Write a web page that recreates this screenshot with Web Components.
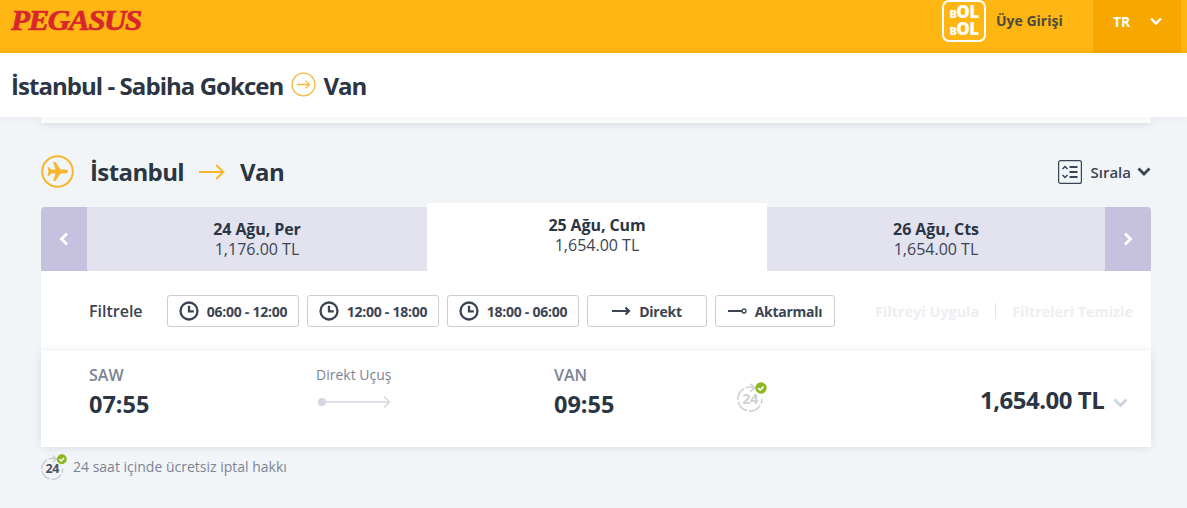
<!DOCTYPE html>
<html lang="tr">
<head>
<meta charset="utf-8">
<title>Pegasus</title>
<style>
  html, body { margin: 0; height: 508px; overflow: hidden; background: #f2f5f8; }
  body { font-family: "Open Sans", "Noto Sans", sans-serif; color: #2b3543; }
</style>
</head>
<body>
<pg-header></pg-header>
<pg-route-bar from="İstanbul - Sabiha Gokcen" to="Van"></pg-route-bar>
<pg-results>
  <pg-date-tabs></pg-date-tabs>
  <pg-filters></pg-filters>
  <pg-flight></pg-flight>
</pg-results>

<script>
const icon24 = (size, color, text) => `
  <svg width="${size}" height="${size}" viewBox="0 0 30 30" fill="none">
    <path d="M17.500 5.900A12 12 0 1 0 25 17" stroke="${color}" stroke-width="1.700" stroke-dasharray="9 2 13 2 13 2 13 2 30" />
    <path d="M13.500 1.800l4.300 4.100-4.600 3.600" stroke="${color}" stroke-width="1.700" />
    <text x="13" y="22" text-anchor="middle" font-family="Open Sans, sans-serif" font-weight="700" font-size="14.500" letter-spacing="-.5" fill="${text}">24</text>
    <circle cx="24" cy="6" r="5.700" fill="#8ab81e" />
    <path d="M21.300 6.100l2 2 3.200-3.400" stroke="#fff" stroke-width="1.700" />
  </svg>`

const clock = `
  <svg width="20" height="20" viewBox="0 0 20 20" fill="none" stroke="#3b4453" stroke-width="2.300">
    <circle cx="10" cy="10" r="8.500" />
    <path d="M10 4.800v5.600h4.800" />
  </svg>`

customElements.define('pg-header', class extends HTMLElement {
  constructor() {
    super()
    this.attachShadow({ mode: 'open' }).innerHTML = `
      <style>
        :host { display: flex; height: 53px; background: #ffb612; align-items: stretch; }
        .logo {
          margin: 5px 0 0 11px; height: 30px;
          font: italic 700 29px/30px "Liberation Serif", serif;
          letter-spacing: -1.300px;
          color: #d8262c;
          transform: scaleX(1.070);
          transform-origin: left;
          -webkit-text-stroke: .7px #d8262c;
        }
        .spacer { flex: 1; }
        .bolbol {
          box-sizing: border-box;
          width: 44px; height: 42px;
          margin-right: 10px;
          border: 2px solid #fff;
          border-radius: 7px;
          color: #fff;
          font: 800 17px/15px "Open Sans", sans-serif;
          letter-spacing: -.6px;
          display: flex; flex-direction: column; align-items: center; justify-content: center;
        }
        .bolbol small { font-size: 11px; }
        .login { font: 700 14px/42px "Open Sans", sans-serif; color: #4e4a3e; width: 97px; }
        .lang {
          width: 88px; margin-right: 6px;
          background: #f7a700;
          color: #fff;
          font: 700 14px/44px "Open Sans", sans-serif;
          display: flex; align-items: flex-start; gap: 20px;
          padding-left: 20px; box-sizing: border-box;
        }
        .lang svg { margin-top: 17px; }
      </style>
      <div class="logo">PEGASUS</div>
      <div class="spacer"></div>
      <div class="bolbol"><span><small>B</small>OL</span><span><small>B</small>OL</span></div>
      <div class="login">Üye Girişi</div>
      <div class="lang"><span>TR</span>
        <svg width="12" height="9" viewBox="0 0 12 9" fill="none" stroke="#fff" stroke-width="2.400"><path d="M1 1.500l5 5 5-5" /></svg>
      </div>`
  }
})

customElements.define('pg-route-bar', class extends HTMLElement {
  connectedCallback() {
    if (this.shadowRoot) return
    this.attachShadow({ mode: 'open' }).innerHTML = `
      <style>
        :host {
          display: flex; position: relative; z-index: 1;
          box-sizing: border-box; height: 64px;
          background: #fff;
          padding: 2px 0 0 11px;
          align-items: center; gap: 8px;
          font: 700 24px/62px "Open Sans", sans-serif;
          letter-spacing: -.95px;
          color: #2b3543;
          box-shadow: 0 2px 8px rgba(60,70,90,.06);
        }
        svg { margin: -3px -1px 0 0; }
      </style>
      <span>${this.getAttribute('from')}</span>
      <svg width="25" height="25" viewBox="0 0 25 25" fill="none" stroke="#f4b93a" stroke-width="1.300">
        <circle cx="12.500" cy="12.500" r="11.400" />
        <path d="M6 12.500h12.500M14.500 8.600l4 3.900-4 3.900" />
      </svg>
      <span>${this.getAttribute('to')}</span>`
  }
})

customElements.define('pg-results', class extends HTMLElement {
  constructor() {
    super()
    this.attachShadow({ mode: 'open' }).innerHTML = `
      <style>
        :host { display: block; width: 1110px; margin-left: 41px; }
        .stub { height: 6px; background: #fff; box-shadow: 0 2px 6px rgba(60,70,90,.12); }
        .title {
          display: flex; align-items: center;
          height: 80px; padding-top: 17px; box-sizing: border-box;
          font: 700 24px/1 "Open Sans", sans-serif;
          letter-spacing: -.6px;
          color: #2b3543;
        }
        .plane { margin-right: 16px; }
        .arrow { margin: 0 15px 0 15px; }
        .sort {
          margin-left: auto; display: flex; align-items: center; gap: 9px;
          font: 600 15px/1 "Open Sans", sans-serif; letter-spacing: 0; color: #3b4453;
        }
        .sort span { margin-top: 1px; }
        .note {
          display: flex; align-items: center; gap: 6px;
          height: 40px;
          font: 400 14px/1 "Open Sans", sans-serif; color: #7c8494;
        }
      </style>
      <div class="stub"></div>
      <div class="title">
        <svg class="plane" width="33" height="33" viewBox="0 0 33 33">
          <circle cx="16.500" cy="16.500" r="15.300" fill="none" stroke="#f7b52b" stroke-width="2" />
          <path fill="#f7b52b" d="M27 16.500c0-1.200-1.400-2-2.800-2h-4.700L14.400 7h-2.300l2.500 7.500H10l-1.700-2.200H6.500l1 4.200-1 4.200h1.800L10 18.500h4.600L12.100 26h2.300l5.100-7.500h4.700c1.400 0 2.800-.8 2.800-2z"/>
        </svg>
        <span>İstanbul</span>
        <svg class="arrow" width="26" height="16" viewBox="0 0 26 16" fill="none" stroke="#f7b52b" stroke-width="1.800">
          <path d="M0 8h24M17 1l7.500 7-7.500 7" />
        </svg>
        <span>Van</span>
        <div class="sort">
          <svg width="24" height="24" viewBox="0 0 24 24" fill="none" stroke="#3b4453">
            <rect x=".6" y=".6" width="22.800" height="22.800" rx="2" stroke-width="1.200" />
            <path d="M4.500 9l2.500-2.500L9.500 9M4.500 15l2.500 2.500L9.500 15" stroke-width="1.500" />
            <path d="M11.500 7h8M11.500 12h8M11.500 17h8" stroke-width="2" />
          </svg>
          <span>Sırala</span>
          <svg width="14" height="10" viewBox="0 0 14 10" fill="none" stroke="#3b4453" stroke-width="2.800" style="margin-left:-3px"><path d="M1.500 1.500L7 7l5.500-5.500" /></svg>
        </div>
      </div>
      <slot></slot>
      <div class="note">
        ${icon24(26, '#c9ccd2', '#4a5260')}
        <span>24 saat içinde ücretsiz iptal hakkı</span>
      </div>`
  }
})

customElements.define('pg-date-tabs', class extends HTMLElement {
  constructor() {
    super()
    const tab = (day, price, cls = '') => `
      <div class="tab ${cls}"><b>${day}</b><span>${price}</span></div>`
    this.attachShadow({ mode: 'open' }).innerHTML = `
      <style>
        :host { display: flex; align-items: flex-end; height: 68px; }
        .nav {
          width: 46px; height: 64px; background: #c6c1df;
          display: flex; align-items: center; justify-content: center;
        }
        .nav.l { border-radius: 4px 0 0 0; }
        .nav.r { border-radius: 0 4px 0 0; }
        .tab {
          width: 340px; height: 64px; background: #e3e3f0;
          display: flex; flex-direction: column; align-items: center; justify-content: center;
          font: 400 16px/20px "Open Sans", sans-serif; color: #3b4453;
        }
        .tab b { font-weight: 700; letter-spacing: -.1px; color: #2b3543; }
        .tab.on { height: 68px; box-sizing: border-box; padding-bottom: 4px; background: #fff; }
        .tab.last { width: 338px; }
      </style>
      <div class="nav l"><svg width="10" height="14" viewBox="0 0 10 14" fill="none" stroke="#fff" stroke-width="2.800"><path d="M8 1.500L2.500 7 8 12.500" /></svg></div>
      ${tab('24 Ağu, Per', '1,176.00 TL')}
      ${tab('25 Ağu, Cum', '1,654.00 TL', 'on')}
      ${tab('26 Ağu, Cts', '1,654.00 TL', 'last')}
      <div class="nav r"><svg width="10" height="14" viewBox="0 0 10 14" fill="none" stroke="#fff" stroke-width="2.800"><path d="M2 1.500L7.500 7 2 12.500" /></svg></div>`
  }
})

customElements.define('pg-filters', class extends HTMLElement {
  constructor() {
    super()
    const btn = (svg, label, w) => `
      <div class="btn" style="width:${w}px">${svg}<span>${label}</span></div>`
    this.attachShadow({ mode: 'open' }).innerHTML = `
      <style>
        :host {
          display: flex; align-items: center;
          height: 80px; box-sizing: border-box;
          padding: 0 18px 0 48px;
          background: #fff;
          position: relative;
          font-family: "Open Sans", sans-serif;
        }
        .lbl { font-size: 16px; font-weight: 600; color: #3b4453; width: 78px; }
        .btn {
          box-sizing: border-box; height: 32px; margin-right: 8px;
          border: 1px solid #ccced3; border-radius: 3px;
          display: flex; align-items: center; justify-content: center; gap: 8px;
          font-size: 14px; font-weight: 700; color: #3b4453; letter-spacing: -.25px;
        }
        .acts {
          margin-left: auto; display: flex; align-items: center;
          font-size: 14.400px; font-weight: 700; color: #eceef1;
        }
        .acts i { width: 1px; height: 16px; background: #e2e4e8; margin: 0 16px; }
      </style>
      <div class="lbl">Filtrele</div>
      ${btn(clock, '06:00 - 12:00', 132)}
      ${btn(clock, '12:00 - 18:00', 132)}
      ${btn(clock, '18:00 - 06:00', 132)}
      ${btn(`<svg width="19" height="10" viewBox="0 0 19 10" fill="none" stroke="#3b4453" stroke-width="2.200"><path d="M0 5h17M13.500 1.500L17 5l-3.500 3.500" /></svg>`, 'Direkt', 120)}
      ${btn(`<svg width="19" height="8" viewBox="0 0 19 8" fill="none" stroke="#3b4453"><path d="M0 4h14" stroke-width="2" /><circle cx="16" cy="4" r="2" stroke-width="1.300" /></svg>`, 'Aktarmalı', 120)}
      <div class="acts"><span>Filtreyi Uygula</span><i></i><span>Filtreleri Temizle</span></div>`
  }
})

customElements.define('pg-flight', class extends HTMLElement {
  constructor() {
    super()
    this.attachShadow({ mode: 'open' }).innerHTML = `
      <style>
        :host {
          display: flex; height: 96px; box-sizing: border-box;
          padding: 12px 0 0 48px;
          background: #fff;
          position: relative;
          box-shadow: 0 -1px 8px rgba(60,70,90,.06), 0 2px 8px rgba(60,70,90,.08);
          font-family: "Open Sans", sans-serif;
        }
        .pt { width: 228px; }
        .pt.arr { width: 183px; }
        .code { font-size: 16px; font-weight: 600; line-height: 24px; color: #7c8494; }
        .time { font-size: 23.500px; font-weight: 700; line-height: 34px; color: #2b3543; }
        .mid { width: 237px; margin-left: -1px; margin-right: 1px; }
        .mid span { display: block; font-size: 14px; line-height: 24px; color: #7c8494; }
        .mid svg { display: block; margin: 8px 0 0 1px; }
        .i24 { width: 243px; margin-top: 19px; }
        .price {
          font-size: 24px; font-weight: 700; color: #2b3543; letter-spacing: -.5px;
          line-height: 34px; margin-top: 20px; white-space: nowrap;
        }
        .chev { margin: 35px 0 0 9px; }
      </style>
      <div class="pt"><div class="code">SAW</div><div class="time">07:55</div></div>
      <div class="mid">
        <span>Direkt Uçuş</span>
        <svg width="74" height="14" viewBox="0 0 74 14" fill="none" stroke="#d4d7e0">
          <circle cx="5" cy="7" r="4" fill="#d4d7e0" stroke="none" />
          <path d="M6 7h66M67 1.500L72.500 7 67 12.500" stroke-width="1.400" />
        </svg>
      </div>
      <div class="pt arr"><div class="code">VAN</div><div class="time">09:55</div></div>
      <div class="i24">${icon24(30, '#cfd1d6', '#cfd1d6')}</div>
      <div class="price">1,654.00 TL</div>
      <svg class="chev" width="15" height="10" viewBox="0 0 15 10" fill="none" stroke="#cfd3dc" stroke-width="2.800"><path d="M1.500 1.500l6 6 6-6" /></svg>`
  }
})
</script>
</body>
</html>
